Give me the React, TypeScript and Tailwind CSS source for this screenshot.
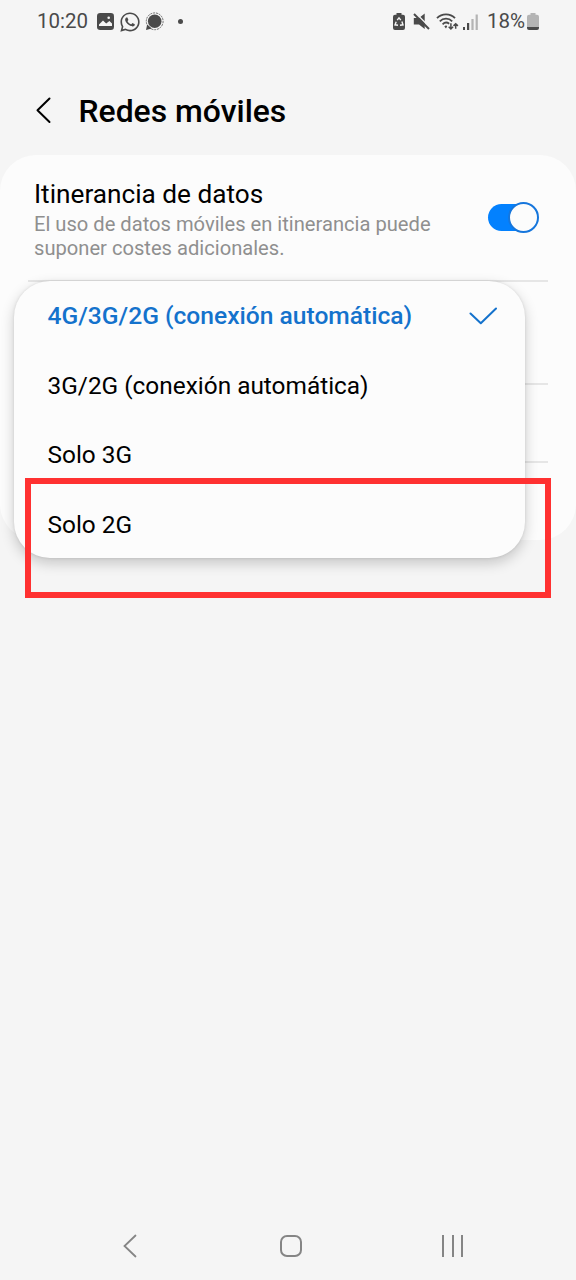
import { FaWhatsapp } from "react-icons/fa"


const networkModes = [
    "4G/3G/2G (conexión automática)",
    "3G/2G (conexión automática)",
    "Solo 3G",
    "Solo 2G",
]

const StatusBar = () => (
    <div className="flex h-[43px] items-center justify-between pl-[37px] pr-[37px] text-[#4a4a4a]">
        {/* clock and notifications */}
        <div className="flex items-center">
            <span className="w-[60px] text-[20.5px] leading-[43px]">10:20</span>
            {/* gallery */}
            <svg width="17" height="17" viewBox="0 0 17 17">
                <rect width="17" height="17" rx="3.2" fill="currentColor" />
                <path d="M2 11.6 L6 7.4 L9.2 10.4 L12.4 8 L15 10.6 V13 H2 Z" fill="#f5f5f5" />
                <circle cx="11.7" cy="4.8" r="1.3" fill="#f5f5f5" />
            </svg>
            <FaWhatsapp size={22} className="ml-[5px]" />
            {/* dotted chat bubble */}
            <svg width="19" height="19" viewBox="0 0 19 19" className="ml-[4px]">
                <circle cx="9.7" cy="9.3" r="8.4" fill="none" stroke="currentColor" strokeWidth="1" strokeDasharray="2 0.9" opacity="0.8" />
                <circle cx="9.7" cy="9.3" r="6.8" fill="currentColor" />
                <path d="M1 18 L2.2 12.5 L6.8 16.6 Z" fill="currentColor" />
            </svg>
            <div className="ml-[14px] size-[5px] rounded-full bg-[#4a4a4a]" />
        </div>
        {/* system icons */}
        <div className="flex items-center">
            {/* battery saver */}
            <svg width="12" height="17" viewBox="0 0 12 17">
                <path d="M3.5 0 H8.5 V1.8 H10 A2 2 0 0 1 12 3.8 V15 A2 2 0 0 1 10 17 H2 A2 2 0 0 1 0 15 V3.8 A2 2 0 0 1 2 1.8 H3.5 Z" fill="currentColor" />
                <path d="M4.2 7.2 L6 4.8 L7.8 7.2 M8.9 8.5 L10 11.8 L7 12.2 M5 12.2 L2 11.8 L3.2 8.7" fill="none" stroke="#f5f5f5" strokeWidth="1.4" />
            </svg>
            {/* muted speaker */}
            <svg width="17" height="17" viewBox="0 0 17 17" className="ml-[8px]">
                <path d="M0.8 5 H6 L11.7 0.5 V16 L6 11.5 H0.8 Z" fill="currentColor" />
                <path d="M2.9 0.3 L17 14.4" stroke="#f5f5f5" strokeWidth="1.4" />
                <path d="M1 1 L16 16" stroke="currentColor" strokeWidth="2" />
            </svg>
            {/* wifi with traffic arrows */}
            <svg width="23" height="18" viewBox="0 0 23 18" className="ml-[6px]" fill="none" stroke="currentColor" strokeWidth="1.8">
                <path d="M1 5.2 C5.8 0.1 14.2 0.1 19 5.2" />
                <path d="M3.8 8.4 C7.2 4.8 12.8 4.8 16.2 8.4" />
                <path d="M6.6 11.3 C8.6 9.3 11.2 9.2 13.2 10.8" />
                <path d="M8.3 13.4 L10 12.2 L11.2 13.2 L10 15.4 Z" fill="currentColor" stroke="none" />
                <path d="M14.9 10.2 V15.8 M12.7 13.8 L14.9 16 L17.1 13.8 M19.7 15.8 V10.8 M17.5 12.9 L19.7 10.7 L21.9 12.9" strokeWidth="1.5" />
            </svg>
            {/* signal strength */}
            <svg width="15" height="16" viewBox="0 0 15 16" className="ml-[4px]">
                <rect x="0" y="13" width="2" height="3" fill="currentColor" />
                <rect x="4" y="9" width="2.2" height="7" fill="currentColor" />
                <rect x="8.4" y="5" width="2.2" height="11" fill="#b4b4b4" />
                <rect x="12.6" y="0.5" width="2.2" height="15.5" fill="#b4b4b4" />
            </svg>
            <span className="ml-[9px] w-[40px] text-[20.5px] leading-[43px]">18%</span>
            <svg width="12" height="17" viewBox="0 0 12 17">
                <path d="M3.5 0 H8.5 V1.8 H10 A2 2 0 0 1 12 3.8 V14 H0 V3.8 A2 2 0 0 1 2 1.8 H3.5 Z" fill="#b4b4b4" />
                <path d="M0 14 H12 V15 A2 2 0 0 1 10 17 H2 A2 2 0 0 1 0 15 Z" fill="currentColor" />
            </svg>
        </div>
    </div>
)

const NetworkModeMenu = () => (
    <ul className="absolute left-[14px] top-[126px] h-[277px] w-[511px] rounded-[36px] bg-[#fcfcfc] pt-px shadow-[0_5px_14px_rgba(0,0,0,0.2),0_0_3px_rgba(0,0,0,0.1)]">
        {networkModes.map((mode, i) => (
            <li key={mode} className={`flex h-[69.4px] items-center justify-between pl-[33.5px] pr-[28px] ${i === 0 ? "text-[24.6px] font-medium text-[#1472cc]" : "text-[24.4px] text-black"}`}>
                {mode}
                {i === 0 && (
                    <svg width="28" height="18" viewBox="0 0 28 18" className="mb-[2px]" fill="none" stroke="currentColor" strokeWidth="2" strokeLinecap="round" strokeLinejoin="round">
                        <path d="M1.5 6.5 L11.8 16.3 L27 1.5" />
                    </svg>
                )}
            </li>
        ))}
    </ul>
)

const App = () => {
  return (
    <div className="relative flex h-[1280px] w-[576px] flex-col overflow-hidden bg-[#f5f5f5] font-['Roboto',sans-serif]">
        <StatusBar />
        {/* header */}
        <header className="flex h-[112px] items-center pl-[36px] pt-[24px]">
            <svg width="15" height="27" viewBox="0 0 15 27" className="mb-[2px]" fill="none" stroke="#000" strokeWidth="2" strokeLinecap="round" strokeLinejoin="round">
                <path d="M13.5 1.5 L1.5 13.3 L13.5 25" />
            </svg>
            <h1 className="ml-[27.5px] pt-px text-[31.9px] font-medium text-black">Redes móviles</h1>
        </header>
        {/* settings card */}
        <main className="relative h-[385px] rounded-[36px] bg-[#fcfcfc]">
            <section className="ml-[28px] mr-[28px] flex h-[127px] items-start justify-between border-b-2 border-[#e6e6e6] pl-[6px] pr-[9px]">
                <div className="pt-[21px]">
                    <h2 className="text-[26.2px] leading-[36px] text-black">Itinerancia de datos</h2>
                    <p className="w-[410px] text-[20.15px] leading-[24px] text-[#8f8f8f]">El uso de datos móviles en itinerancia puede suponer costes adicionales.</p>
                </div>
                <button role="switch" aria-checked="true" aria-label="Itinerancia de datos" className="mt-[47px] flex h-[31px] w-[52px] shrink-0 items-center justify-end">
                    <span className="-mr-[26px] h-[27px] w-[46px] shrink-0 rounded-full bg-[#0381fe]" />
                    <span className="size-[31px] shrink-0 rounded-full border-2 border-[#1676dc] bg-[#fcfcfc]" />
                </button>
            </section>
            <div className="mx-[28px] h-[103px] border-b-2 border-[#e6e6e6]" />
            <div className="mx-[28px] h-[78px] border-b-2 border-[#e6e6e6]" />
            <NetworkModeMenu />
        </main>
        {/* highlighted option */}
        <div className="absolute left-[25px] top-[478px] h-[120px] w-[526px] border-6 border-[#ff3131]" />
        {/* navigation bar */}
        <nav className="mt-auto flex h-[68px] items-center justify-between pl-[123px] pr-[113px] text-[#858585]">
            <svg width="14" height="24" viewBox="0 0 14 24" fill="none" stroke="currentColor" strokeWidth="1.8" strokeLinecap="round">
                <path d="M12.5 1.5 L1.5 12 L12.5 22.5" />
            </svg>
            <div className="ml-[2px] size-[22px] rounded-[7px] border-2 border-[#858585]" />
            <div className="flex h-[22px] w-[21px] justify-between">
                <span className="w-[2px] bg-[#858585]" />
                <span className="w-[2px] bg-[#858585]" />
                <span className="w-[2px] bg-[#858585]" />
            </div>
        </nav>
    </div>
  )
}

export default App
